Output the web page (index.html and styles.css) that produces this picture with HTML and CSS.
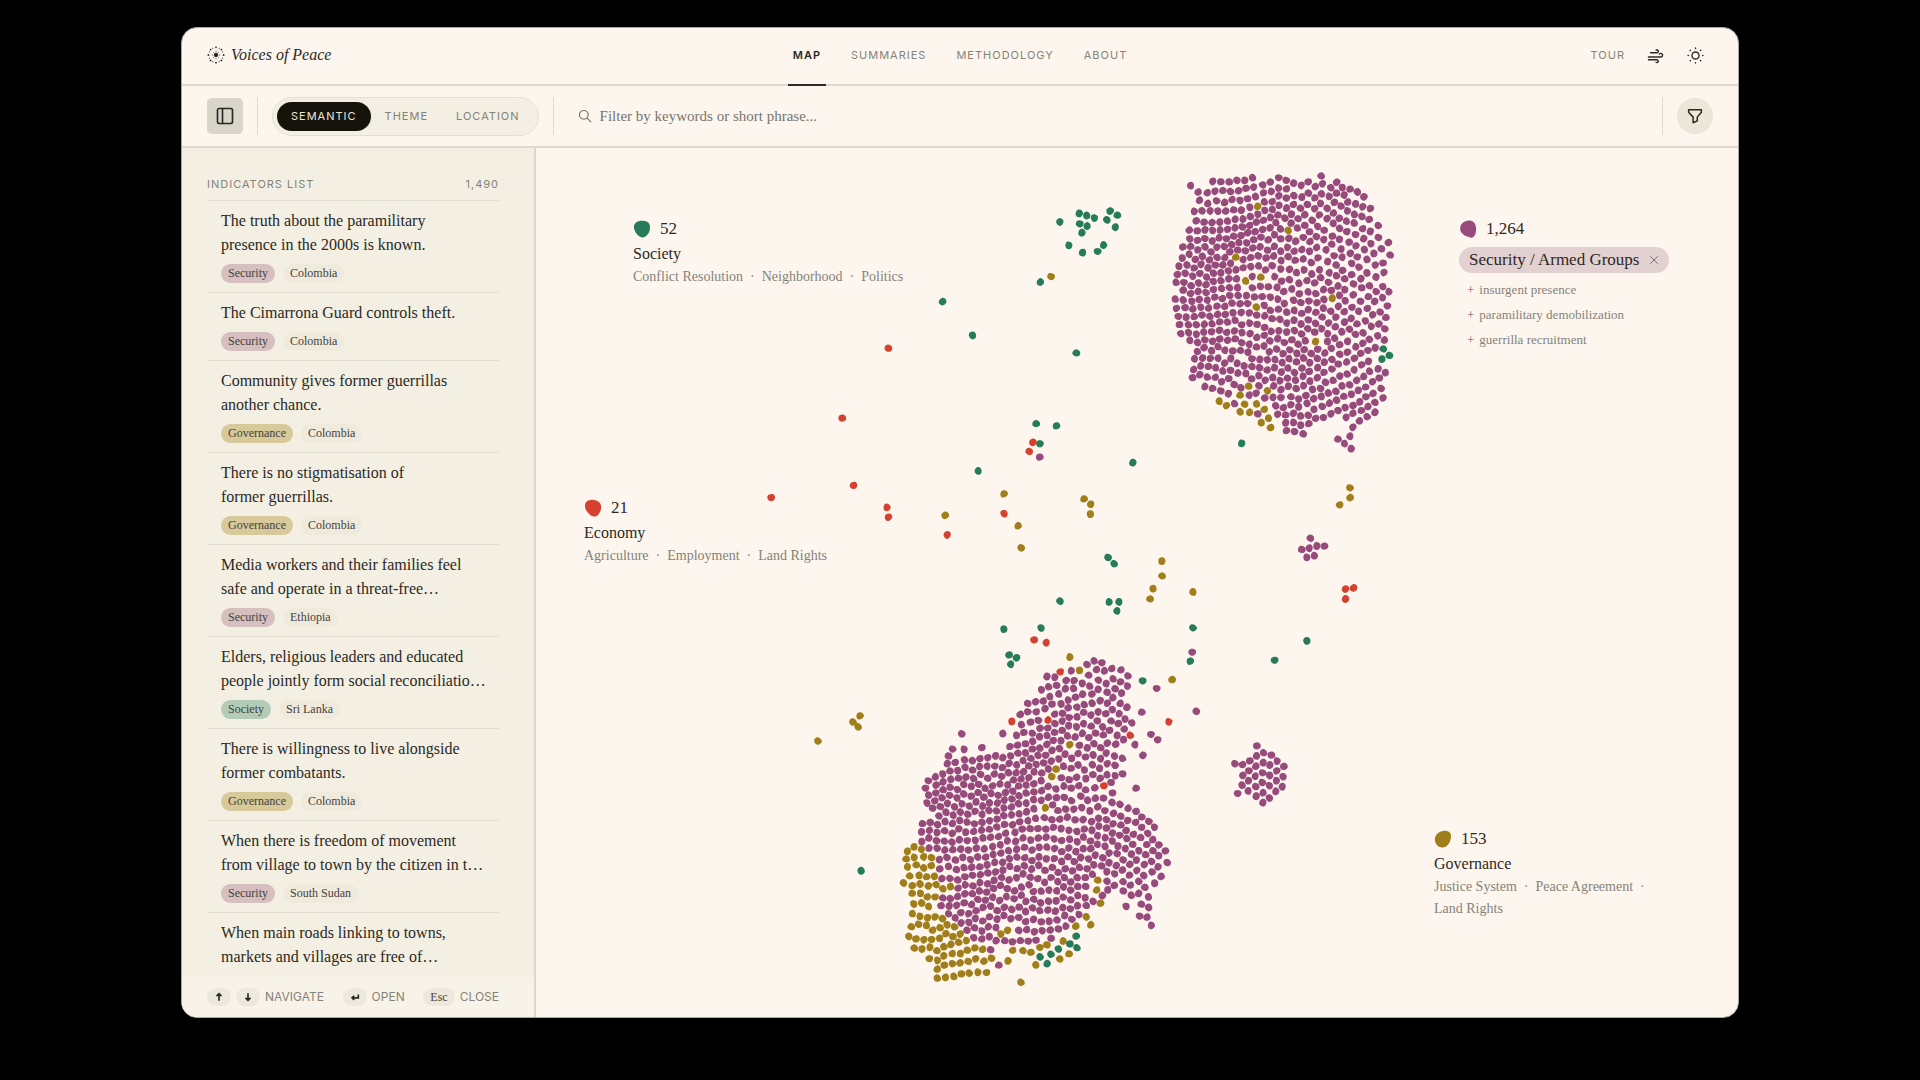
FILE: index.html
```html
<!DOCTYPE html>
<html lang="en">
<head>
<meta charset="utf-8">
<title>Voices of Peace</title>
<link rel="stylesheet" href="styles.css">
</head>
<body>
<div class="app">
  <header class="topbar">
    <a class="brand" href="#">
      <svg class="brand-mark" viewBox="0 0 20 20" aria-hidden="true">
        <circle cx="10" cy="10" r="2.400"/>
        <g class="rays">
          <path d="M10 7V5M10 13v2M7 10H5M13 10h2M12 8l1.500-1.500M8 12l-1.500 1.500M8 8L6.500 6.500M12 12l1.500 1.500"/>
        </g>
        <g>
          <circle cx="10" cy="1.500" r="1"/><circle cx="10" cy="18.500" r="1"/><circle cx="1.500" cy="10" r="1"/><circle cx="18.500" cy="10" r="1"/>
          <circle cx="4" cy="4" r="1"/><circle cx="16" cy="4" r="1"/><circle cx="4" cy="16" r="1"/><circle cx="16" cy="16" r="1"/>
          <circle cx="6.500" cy="2.600" r=".6"/><circle cx="13.500" cy="2.600" r=".6"/><circle cx="6.500" cy="17.400" r=".6"/><circle cx="13.500" cy="17.400" r=".6"/>
          <circle cx="2.600" cy="6.500" r=".6"/><circle cx="17.400" cy="6.500" r=".6"/><circle cx="2.600" cy="13.500" r=".6"/><circle cx="17.400" cy="13.500" r=".6"/>
        </g>
      </svg>
      <span>Voices of Peace</span>
    </a>
    <nav class="nav caps">
      <a class="nav-link is-active" href="#">Map</a>
      <a class="nav-link" href="#">Summaries</a>
      <a class="nav-link" href="#">Methodology</a>
      <a class="nav-link" href="#">About</a>
    </nav>
    <div class="tools">
      <button class="text-button caps" type="button">Tour</button>
      <button class="icon-button" type="button" aria-label="Motion">
        <svg class="icon small" viewBox="0 0 24 24"><path d="M12.800 21.600A2 2 0 1 0 14 18H2"/><path d="M17.500 10a2.500 2.500 0 1 1 2 4H2"/><path d="M9.800 4.400A2 2 0 1 1 11 8H2" transform="translate(3 0)"/></svg>
      </button>
      <button class="icon-button" type="button" aria-label="Theme">
        <svg class="icon small" viewBox="0 0 24 24"><circle cx="12" cy="12" r="5"/><path d="M12 1.500v.5M12 22v.5M1.500 12H2M22 12h.5M4.500 4.500l.4.400M19.100 19.100l.4.400M4.500 19.500l.4-.4M19.100 4.900l.4-.4"/></svg>
      </button>
    </div>
  </header>

  <div class="toolbar">
    <button class="panel-button" type="button" aria-label="Toggle list">
      <svg class="icon" viewBox="0 0 24 24"><rect x="3" y="3" width="18" height="18" rx="2"/><path d="M9 3v18"/></svg>
    </button>
    <span class="divider"></span>
    <div class="segments">
      <button class="segment caps is-active" type="button">Semantic</button>
      <button class="segment caps" type="button">Theme</button>
      <button class="segment caps" type="button">Location</button>
    </div>
    <span class="divider"></span>
    <label class="search">
      <svg class="icon search-icon" viewBox="0 0 24 24" role="img" aria-label="Filter"><circle cx="10" cy="10" r="7.500"/><path d="M15.500 15.500L22 22"/></svg>
      <input class="search-input" type="text" placeholder="Filter by keywords or short phrase...">
    </label>
    <span class="divider"></span>
    <button class="filter-button" type="button" aria-label="Filters">
      <svg class="icon" viewBox="0 0 24 24"><path d="M3.500 3.500h17v3.500L15 13.500v5L9.500 21v-7.500L3.500 7z"/></svg>
    </button>
  </div>

  <div class="content">
    <aside class="sidebar">
      <div class="list-head caps"><span>Indicators list</span><span>1,490</span></div>
      <ul class="list">
        <li class="item"><a class="item-title" href="#">The truth about the paramilitary<br>presence in the 2000s is known.</a><div class="tags"><span class="tag security">Security</span><span class="tag">Colombia</span></div></li>
        <li class="item"><a class="item-title" href="#">The Cimarrona Guard controls theft.</a><div class="tags"><span class="tag security">Security</span><span class="tag">Colombia</span></div></li>
        <li class="item"><a class="item-title" href="#">Community gives former guerrillas<br>another chance.</a><div class="tags"><span class="tag governance">Governance</span><span class="tag">Colombia</span></div></li>
        <li class="item"><a class="item-title" href="#">There is no stigmatisation of<br>former guerrillas.</a><div class="tags"><span class="tag governance">Governance</span><span class="tag">Colombia</span></div></li>
        <li class="item"><a class="item-title" href="#">Media workers and their families feel<br>safe and operate in a threat-free…</a><div class="tags"><span class="tag security">Security</span><span class="tag">Ethiopia</span></div></li>
        <li class="item"><a class="item-title" href="#">Elders, religious leaders and educated<br>people jointly form social reconciliatio…</a><div class="tags"><span class="tag society">Society</span><span class="tag">Sri Lanka</span></div></li>
        <li class="item"><a class="item-title" href="#">There is willingness to live alongside<br>former combatants.</a><div class="tags"><span class="tag governance">Governance</span><span class="tag">Colombia</span></div></li>
        <li class="item"><a class="item-title" href="#">When there is freedom of movement<br>from village to town by the citizen in t…</a><div class="tags"><span class="tag security">Security</span><span class="tag">South Sudan</span></div></li>
        <li class="item"><a class="item-title" href="#">When main roads linking to towns,<br>markets and villages are free of…</a></li>
      </ul>
      <footer class="hints">
        <span class="hint"><kbd class="key"><svg class="key-icon" viewBox="0 0 12 12"><path d="M6 10.500V2M3 5l3-3 3 3"/></svg></kbd><kbd class="key"><svg class="key-icon" viewBox="0 0 12 12"><path d="M6 1.500V10M3 7l3 3 3-3"/></svg></kbd>Navigate</span>
        <span class="hint"><kbd class="key"><svg class="key-icon" viewBox="0 0 12 12"><path d="M10 3v4H2.500M5 4.500L2.500 7 5 9.500"/></svg></kbd>Open</span>
        <span class="hint"><kbd class="key">Esc</kbd>Close</span>
      </footer>
    </aside>

    <main class="map">
      <svg class="dots" id="dots" viewBox="0 0 1202 869" role="img" aria-label="Indicators grouped by meaning"></svg>

      <section class="label label-society">
        <div class="count"><svg class="blob" viewBox="0 0 18 18"><path class="fill-society" d="M1 8C0 3 5 .5 9 .7c4 0 8 1.300 8 6.300 0 5-2 8-5.500 10C8 19 2 14 1 8z"/></svg>52</div>
        <h2 class="name">Society</h2>
        <p class="topics">Conflict Resolution&nbsp; ·&nbsp; Neighborhood&nbsp; ·&nbsp; Politics</p>
      </section>
      <section class="label label-economy">
        <div class="count"><svg class="blob" viewBox="0 0 18 18"><path class="fill-economy" d="M1.500 4C3 1 7 .5 10 1c5 .5 8 4 7 9-1 4-3 7-6 7.500C7 18 4 14 2 11 1 9 .5 6 1.500 4z"/></svg>21</div>
        <h2 class="name">Economy</h2>
        <p class="topics">Agriculture&nbsp; ·&nbsp; Employment&nbsp; ·&nbsp; Land Rights</p>
      </section>
      <section class="label label-security">
        <div class="count"><svg class="blob" viewBox="0 0 18 18"><path class="fill-security" d="M2 5C4 1.500 8 0 12 .7c4 .8 5.500 5.300 5 10.300-.3 4-3 7.500-5.500 6.500C7 16.500 3 14.500 1.500 11 1 9 1 7 2 5z"/></svg>1,264</div>
        <button class="chip" type="button">Security / Armed Groups<svg class="chip-close" viewBox="0 0 12 12"><path d="M1.500 1.500l9 9M10.500 1.500l-9 9"/></svg></button>
        <ul class="terms">
          <li><button class="term" type="button"><span class="plus">+</span>insurgent presence</button></li>
          <li><button class="term" type="button"><span class="plus">+</span>paramilitary demobilization</button></li>
          <li><button class="term" type="button"><span class="plus">+</span>guerrilla recruitment</button></li>
        </ul>
      </section>
      <section class="label label-governance">
        <div class="count"><svg class="blob" viewBox="0 0 18 18"><path class="fill-governance" d="M1 8c1-4 4-6.500 8-7 4-.8 8 1 8 4.500 0 5-2 9.500-6 11.500-3 1-7 0-8.500-2.500C1 12.500.5 10 1 8z"/></svg>153</div>
        <h2 class="name">Governance</h2>
        <p class="topics">Justice System&nbsp; ·&nbsp; Peace Agreement&nbsp; ·<br>Land Rights</p>
      </section>
    </main>
  </div>
</div>
<script src="dots.js"></script>
</body>
</html>
```
FILE: styles.css
```css
:root {
  --paper: #fdf6ee;
  --panel: #f3efe2;
  --line: #e0d8d0;
  --ink: #2b2925;
  --muted: #85827a;
  --security: #974a7c;
  --governance: #a07e1a;
  --society: #257b5a;
  --economy: #d4422f;
  --serif: "Liberation Serif", serif;
  --sans: Inter, sans-serif;
}
* { box-sizing: border-box; }
body {
  margin: 0;
  height: 100vh;
  padding: 27px 181px 62px;
  background: #000;
  color: var(--ink);
  font-family: var(--serif);
  font-size: 16px;
  line-height: 24px;
}
a { color: inherit; text-decoration: none; }
button { margin: 0; padding: 0; border: 0; background: none; color: inherit; font: inherit; }
ul, h2, p { margin: 0; padding: 0; list-style: none; font-weight: 400; }
svg { display: block; }

.caps { font-family: var(--sans); font-size: 11px; line-height: 16px; letter-spacing: 1px; text-transform: uppercase; color: var(--muted); }
.icon { width: 20px; height: 20px; fill: none; stroke: var(--ink); stroke-width: 2; stroke-linecap: round; stroke-linejoin: round; }
.icon.small { width: 17px; height: 17px; }

.app { display: flex; flex-direction: column; height: 100%; overflow: hidden; border: 1px solid #aaa69f; border-radius: 16px; background: var(--paper); }

.topbar { display: grid; grid-template-columns: 1fr auto 1fr; height: 58px; flex: none; padding: 0 25px; border-bottom: 2px solid var(--line); }
.brand { display: flex; align-items: center; gap: 6px; padding-bottom: 2px; font-style: italic; }
.brand-mark { width: 18px; height: 18px; fill: var(--ink); }
.rays { stroke: var(--ink); stroke-width: 1; opacity: .6; }
.nav { display: flex; gap: 20px; }
.nav-link { display: flex; align-items: center; margin-bottom: -2px; padding: 0 5px 2px; border-bottom: 2px solid transparent; }
.nav-link.is-active { border-color: var(--ink); color: var(--ink); font-weight: 600; }
.tools { display: flex; align-items: center; justify-content: flex-end; gap: 4px; padding-bottom: 2px; }
.text-button { margin-right: 8px; }
.icon-button { display: grid; place-items: center; width: 36px; height: 36px; }

.toolbar { display: flex; align-items: center; height: 62px; flex: none; padding: 0 25px; border-bottom: 2px solid var(--line); }
.panel-button { display: grid; place-items: center; width: 36px; height: 36px; border-radius: 5px; background: #d9d5c9; }
.divider { width: 1px; height: 38px; margin: 0 14px; background: var(--line); }
.segments { display: flex; padding: 4px; border: 1px solid #e5e0d2; border-radius: 20px; background: var(--panel); }
.segment { height: 29px; padding: 0 14px; border-radius: 15px; }
.segment.is-active { background: #16140a; color: #ece6d8; }
.search { display: flex; flex: 1; align-items: center; gap: 8px; padding-left: 10px; }
.search-icon { width: 14px; height: 14px; stroke: #77746c; }
.search-input { flex: 1; border: 0; padding: 0; outline: 0; background: none; color: var(--ink); font: 15px/24px var(--serif); }
.search-input::placeholder { color: #77746c; }
.filter-button { display: grid; place-items: center; width: 36px; height: 36px; border-radius: 50%; background: #ebe6d8; }
.filter-button .icon { width: 18px; height: 18px; }

.content { display: flex; flex: 1; min-height: 0; }
.sidebar { display: flex; flex-direction: column; flex: none; width: 354px; border-right: 2px solid #dcd7ca; background: var(--panel); }
.list-head { display: flex; justify-content: space-between; margin: 0 35px 0 25px; padding: 28px 0 8px; border-bottom: 1px solid #e5e0d2; }
.list { flex: 1; min-height: 0; margin: 0 35px 0 25px; overflow: hidden; }
.item { padding: 8px 0 9px 14px; border-bottom: 1px solid #e2ddd0; }
.item-title { display: block; white-space: nowrap; }
.tags { display: flex; gap: 8px; margin-top: 7px; }
.tag { padding: 0 7px; border-radius: 10px; background: #efeadc; color: #45423b; font-size: 12px; line-height: 19px; }
.tag.security { background: #d5bfbf; }
.tag.governance { background: #d8c99a; }
.tag.society { background: #b3ccb7; }
.hints { display: flex; justify-content: space-between; flex: none; height: 40px; padding: 0 35px 0 25px; background: #f8f3e9; font-family: var(--sans); font-size: 12px; line-height: 18px; text-transform: uppercase; color: var(--muted); }
.hint { display: flex; align-items: center; gap: 5px; }
.key { display: grid; place-items: center; min-width: 24px; height: 18px; padding: 0 7px; border-radius: 9px; background: #ede8dc; color: #45423b; font: 12px/18px var(--serif); text-transform: none; }
.key-icon { width: 10px; height: 10px; fill: none; stroke: var(--ink); stroke-width: 2; }

.map { position: relative; flex: 1; min-width: 0; }
.dots { width: 100%; height: 100%; }
.label { position: absolute; }
.label-society { left: 97px; top: 69px; }
.label-economy { left: 48px; top: 348px; }
.label-security { left: 923px; top: 69px; }
.label-governance { left: 898px; top: 679px; }
.count { display: flex; align-items: center; gap: 9px; font-size: 17px; line-height: 24px; }
.blob { width: 18px; height: 18px; }
.name { font-size: 16px; line-height: 25px; }
.topics { font-size: 14px; line-height: 22px; color: var(--muted); white-space: nowrap; }
.chip { display: flex; align-items: center; gap: 10px; height: 26px; margin-top: 6px; padding: 0 10px; border-radius: 13px; background: #e3d0d0; font-size: 17px; white-space: nowrap; }
.chip-close { width: 10px; height: 10px; stroke: #6d6066; }
.terms { padding: 4px 0 0 8px; }
.terms li { display: flex; height: 25px; }
.term { display: flex; align-items: center; gap: 5px; color: var(--muted); font-size: 13px; }
.plus { color: #805a70; }

.fill-security { fill: var(--security); }
.fill-governance { fill: var(--governance); }
.fill-society { fill: var(--society); }
.fill-economy { fill: var(--economy); }
```
FILE: dots.js
```js
// Each group has its own origin and units per map unit; points are x,y pairs.
const groups = [
  { at: [34, 42], unit: [2.613, 3],
    society: [1331,70,1350,77,1370,84,1411,63,1430,76,1403,89,1280,96,1332,101,1351,108,1425,112,1338,128,1303,166,1394,165,1339,188,1379,184,1229,276,974,335,1052,436,1323,489,1218,701,1271,708,1228,761,1471,818,1067,843,1406,1103,1422,1121],
    governance: [1257,260,1134,912,1343,927,1360,943,1360,972,980,976,1171,1007,1179,1074,1547,1113,1547,1158,1523,1196],
    economy: [832,474,711,684,1209,757,1200,784,741,886,526,923,828,952,832,982,1134,971,986,1035],
    security: [1227,801] },
  { at: [614, 12], unit: [2.8, 3],
    governance: [302,139,387,211,240,292,268,363,310,352,510,415,298,441,463,545,276,678,329,692,252,706,194,724,214,737,265,732,298,732,320,748,252,756,279,757,332,775,311,788,338,803],
    society: [653,567,670,586,650,597,257,850],
    security: [114,77,479,48,237,731,302,762,278,706,297,700,526,838,545,851,564,866,560,829,568,802,382,812,405,815,429,821] },
  { at: [344, 492], unit: [3, 3],
    governance: [569,51,599,91,569,314,528,387,515,410,496,503,653,721,650,750,662,790,619,830,632,854,588,859,382,871,362,882,549,903,501,915,480,922,539,957,567,942,467,975,423,1027,877,119],
    society: [388,45,409,53,392,73,588,888,570,912,591,923,535,927,513,943,480,951,502,971,788,122,931,64],
    economy: [541,95,396,244,504,240,751,286,672,438,866,245,499,8,463,0],
    security: [830,145,785,217,813,283,833,299,765,314,788,346,728,402,768,445,949,213,937,36,245,282,306,323,218,327,252,328,356,976,368,281,738,799,784,792,806,802,779,828,801,831,814,856,805,771] },
  { at: [644, 312], unit: [3, 3],
    governance: [510,83,511,113,479,134,39,396],
    economy: [496,387,521,384,497,417],
    society: [39,503,381,542,284,600],
    security: [391,235,365,268,388,265,411,258,433,258,380,292,403,287,230,857,251,878,274,885,230,888,209,902,291,903,165,911,188,914,249,908,228,919,270,915,311,919,207,932,290,933,188,946,248,938,226,949,269,946,309,950,206,962,289,962,186,976,247,968,227,980,268,977,307,980,173,1000,205,993,287,994,249,998,228,1009,268,1014,248,1028] },
  { at: [0, 0], unit: [1, 1],
    society: [524,453,573,454,583,454,581,463,468,481,505,480,325,723],
    governance: [282,593,317,574,324,568,322,579,614,451] }
];

// Outlines of the packed areas, in the same units as the groups above.
const areas = [
  { at: [614, 12], unit: [2.8, 3], centre: [740, 140], tilt: .05, fan: .14, fills: [
    ['security', [155,50,235,58,300,52,370,46,425,50,475,60,520,58,578,78,608,125,638,175,652,225,680,255,670,300,662,350,670,395,670,450,684,480,668,545,640,560,632,605,656,635,662,695,652,725,635,765,605,778,576,790,550,792,512,768,500,792,470,805,430,810,380,800,345,790,335,740,305,690,285,690,240,700,213,715,170,695,125,672,120,620,108,560,88,540,83,500,70,460,64,425,84,395,68,370,66,325,75,290,80,255,105,215,125,185,125,95,155,90]]] },
  { at: [344, 492], unit: [3, 3], centre: [530, 660], tilt: .16, fan: .1, fills: [
    ['governance', [107,605,135,632,154,650,168,690,178,722,244,722,200,760,165,775,170,800,205,822,243,850,245,885,290,905,330,935,430,925,500,905,480,935,440,955,375,970,330,990,295,1025,250,1020,160,1014,165,975,100,945,80,900,95,850,84,815,78,765,62,740,70,705,62,660]],
    ['security', [575,50,590,52,640,54,695,75,758,84,745,145,730,190,768,220,758,260,735,305,700,325,738,345,718,385,702,425,712,465,745,490,790,493,800,530,830,552,840,600,860,618,866,690,850,725,834,755,808,775,760,785,700,765,670,770,640,808,600,840,570,875,525,905,440,920,380,915,340,935,290,905,245,885,245,845,200,815,170,780,185,730,180,690,145,645,118,620,118,550,160,525,145,500,134,465,144,420,190,400,190,340,230,345,345,330,385,345,395,300,385,270,420,235,402,210,430,190,490,175,500,160,475,145,490,108,545,100,555,68]]] }
];

const NS = 'http://www.w3.org/2000/svg';
const svg = document.getElementById('dots');
const placed = [];
let seed = 11;
const rand = () => (seed = (seed * 16807) % 2147483647) / 2147483647;

const shapes = [
  'M-3.900-1.200C-3.400-3.600-.6-4 1.400-3.500 3.700-2.900 4.300-.6 3.400 1.500 2.500 3.500.4 3.800-1.500 3.200-3.600 2.500-4.200.6-3.900-1.200z',
  'M-3.300-2.100C-1.500-4 2-3.700 3.600-1.700 4.400 0 3.200 2.700 1.200 3.600-1 4.200-3.200 2.800-3.800 1-4.100-.2-3.900-1.300-3.300-2.100z'
];

function draw(x, y, kind) {
  const p = document.createElementNS(NS, 'path');
  p.setAttribute('d', shapes[rand() < .5 ? 0 : 1]);
  p.setAttribute('class', 'fill-' + kind);
  p.setAttribute('transform', `translate(${x.toFixed(1)} ${y.toFixed(1)}) rotate(${Math.round(rand() * 360)})`);
  svg.appendChild(p);
}

function inside(x, y, poly) {
  let hit = false;
  for (let i = 0, j = poly.length - 2; i < poly.length; j = i, i += 2) {
    const [ax, ay, bx, by] = [poly[i], poly[i + 1], poly[j], poly[j + 1]];
    if ((ay > y) !== (by > y) && x < (bx - ax) * (y - ay) / (by - ay) + ax) hit = !hit;
  }
  return hit;
}

for (const g of groups) {
  for (const kind of ['security', 'governance', 'society', 'economy']) {
    const pts = g[kind] || [];
    for (let i = 0; i < pts.length; i += 2) {
      const x = g.at[0] + pts[i] / g.unit[0], y = g.at[1] + pts[i + 1] / g.unit[1];
      placed.push([x, y]);
      draw(x, y, kind);
    }
  }
}

// Rows fan out on the left and neighbours interlock on the right;
// a few passes of pushing apart then settle the packing.
for (const a of areas) {
  const [cx, cy] = a.centre;
  const local = (x, y) => a.fills.find(f => inside((x - a.at[0]) * a.unit[0], (y - a.at[1]) * a.unit[1], f[1]));
  const free = [];
  for (let i = -34; i <= 34; i++) {
    for (let j = -30; j <= 30; j++) {
      const u = i * 7.4, v = j * 9.8;
      const lock = Math.min(1, Math.max(.15, (u + 30) / 90));
      const x = cx + u + Math.sin(v / 19 + u / 50) * 3.4 + (rand() - .5) * 3;
      const y = cy + v + (i % 2 ? 4.9 * lock : 0) - u * (a.tilt + a.fan * Math.cos((v + 130) / 70))
        + Math.sin(u / 17 + v / 40) * 3 + (rand() - .5) * 3;
      if (!local(x, y)) continue;
      if (placed.some(p => Math.hypot(p[0] - x, p[1] - y) < 5.6)) continue;
      free.push([x, y]);
    }
  }
  for (let pass = 0; pass < 14; pass++) {
    for (let m = 0; m < free.length; m++) {
      const p = free[m];
      for (let n = m + 1; n < free.length + placed.length; n++) {
        const fixed = n >= free.length;
        const q = fixed ? placed[n - free.length] : free[n];
        const dx = p[0] - q[0], dy = p[1] - q[1];
        const d = Math.hypot(dx, dy);
        if (d >= 7.9 || d === 0) continue;
        const push = (7.9 - d) / d * (fixed ? .6 : .4);
        p[0] += dx * push;
        p[1] += dy * push;
        if (!fixed) { q[0] -= dx * push; q[1] -= dy * push; }
      }
    }
  }
  for (const [x, y] of free) draw(x, y, (local(x, y) || local(x + 5, y) || local(x, y - 5) || local(x - 5, y) || local(x, y + 5) || a.fills[0])[0]);
}
```
